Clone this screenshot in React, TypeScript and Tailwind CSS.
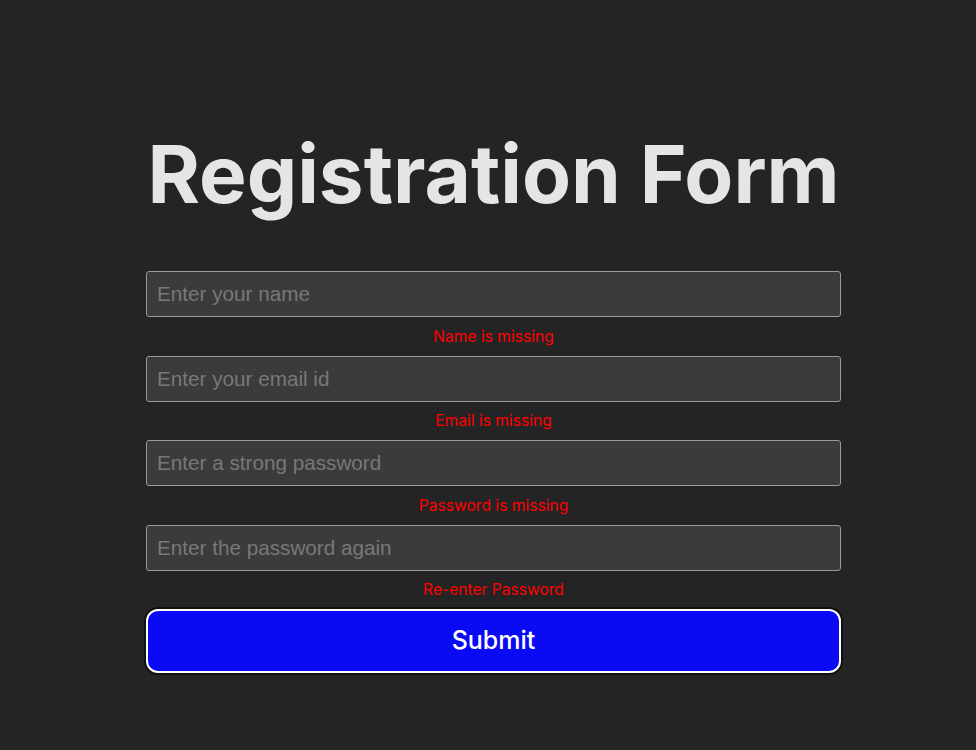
const fields = [
  { placeholder: "Enter your name", type: "text", error: "Name is missing" },
  { placeholder: "Enter your email id", type: "email", error: "Email is missing" },
  { placeholder: "Enter a strong password", type: "password", error: "Password is missing" },
  { placeholder: "Enter the password again", type: "password", error: "Re-enter Password" },
];

export default function App() {
  return (
    <div className="min-h-[750px] bg-[#242424] pt-[130px] font-['Inter',sans-serif]">
      <div className="ml-[146px] flex w-[695px] flex-col">
        <h1 className="text-center text-[80px] font-bold leading-[1.1] text-[#e5e5e5]">
          Registration Form
        </h1>
        <form className="mt-[53px] flex flex-col" onSubmit={(e) => e.preventDefault()}>
          {fields.map((f) => (
            <div key={f.placeholder} className="flex flex-col">
              <input
                type={f.type}
                placeholder={f.placeholder}
                className="h-[46px] w-full rounded-[3px] border border-[#9a9a9a] bg-[#3b3b3b] px-[10px] font-['Liberation_Sans',Arial,sans-serif] text-[20.7px] text-white outline-none placeholder:text-[#787878]"
              />
              <p className="flex h-[38.5px] items-center justify-center text-[15.6px] text-[#ff0000]">
                {f.error}
              </p>
            </div>
          ))}
          <button
            type="submit"
            className="h-[64px] w-full rounded-[12px] border-2 border-white bg-[#0a0af5] text-[25px] font-medium text-white shadow-[0_0_0_2px_#111]"
          >
            Submit
          </button>
        </form>
      </div>
    </div>
  );
}
